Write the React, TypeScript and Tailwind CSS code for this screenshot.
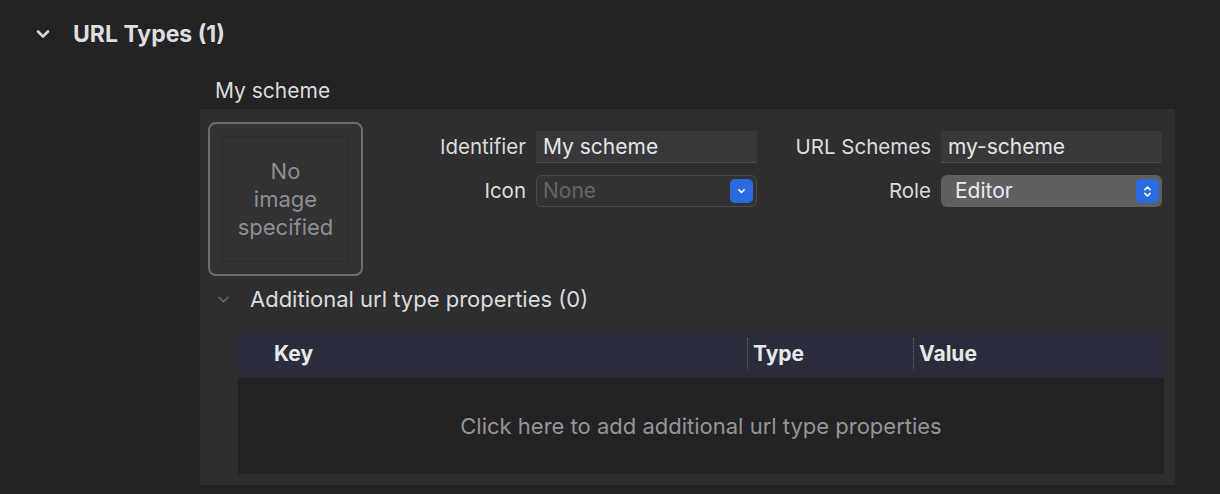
import React from 'react';

// Xcode-style "URL Types" editor panel

const Chevron = ({ className }: { className?: string }) => (
  <svg viewBox="0 0 14 10" className={className} fill="none" stroke="currentColor" strokeLinecap="round" strokeLinejoin="round">
    <path d="M2 2.5 L7 7.5 L12 2.5" />
  </svg>
);

const PopupButton = ({ double }: { double?: boolean }) => (
  <div className="w-[23px] h-[24px] rounded-[5px] bg-[#2b6be0] flex items-center justify-center">
    {double ? (
      <svg viewBox="0 0 10 16" className="w-[9px] h-[15px]" fill="none" stroke="white" strokeWidth="1.8" strokeLinecap="round" strokeLinejoin="round">
        <path d="M2 6 L5 3 L8 6" />
        <path d="M2 10 L5 13 L8 10" />
      </svg>
    ) : (
      <svg viewBox="0 0 10 8" className="w-[9px] h-[7px]" fill="none" stroke="white" strokeWidth="1.8" strokeLinecap="round" strokeLinejoin="round">
        <path d="M2 2 L5 5 L8 2" />
      </svg>
    )}
  </div>
);

export default function App() {
  return (
    <div className="w-[1220px] h-[494px] bg-[#232326] text-[21px] text-[#e4e4e4] overflow-hidden" style={{ fontFamily: 'Inter, "Noto Sans", sans-serif' }}>
      {/* Section header */}
      <div className="flex items-center h-[34px] mt-[17px] pl-[36px]">
        <Chevron className="w-[14px] h-[10px] text-[#d6d6d6] [stroke-width:2.6]" />
        <span className="ml-[23px] font-bold text-[23px] text-[#dedede]">URL Types (1)</span>
      </div>

      {/* Item title */}
      <div className="ml-[215px] mt-[22px] h-[36px] leading-[36px] text-[#dcdcdc]">My scheme</div>

      {/* Item panel */}
      <div className="ml-[200px] w-[975px] h-[376px] bg-[#2e2e30] flex flex-col">
        <div className="flex items-start pt-[13px] pl-[8px]">
          {/* Image well */}
          <div className="w-[155px] h-[154px] rounded-[8px] border-2 border-[#6c6c6e] bg-[#323234] p-[12px]">
            <div className="w-full h-full border border-[#2c2c2e] flex items-center justify-center text-center text-[22px] text-[#8f8f91] leading-[28px]">
              No<br />image<br />specified
            </div>
          </div>

          {/* Form */}
          <div className="grid grid-cols-[163px_221px_164px_221px] gap-x-[10px] gap-y-[12px] mt-[9px] items-center">
            <div className="text-right text-[20.5px] text-[#dcdcdc]">Identifier</div>
            <div className="h-[32px] bg-[#38383a] border-b border-dotted border-[#5a5a5c] pl-[7px] leading-[32px] text-[#e6e6e6]">My scheme</div>
            <div className="text-right text-[20.5px] text-[#dcdcdc]">URL Schemes</div>
            <div className="h-[32px] bg-[#38383a] border-b border-dotted border-[#5a5a5c] pl-[7px] leading-[32px] text-[#e6e6e6]">my-scheme</div>

            <div className="text-right text-[20.5px] text-[#dcdcdc]">Icon</div>
            <div className="h-[32px] rounded-[6px] border border-[#4a4a4c] bg-[#323234] flex items-center justify-between pl-[6px] pr-[3px]">
              <span className="text-[#666668]">None</span>
              <PopupButton />
            </div>
            <div className="text-right text-[20.5px] text-[#dcdcdc]">Role</div>
            <div className="h-[32px] rounded-[6px] bg-[#5f5f61] flex items-center justify-between pl-[14px] pr-[3px]">
              <span className="text-[#ececec]">Editor</span>
              <PopupButton double />
            </div>
          </div>
        </div>

        {/* Additional properties */}
        <div className="flex items-center mt-[11px] h-[24px] pl-[17px]">
          <Chevron className="w-[13px] h-[9px] text-[#6e6e70] [stroke-width:1.4]" />
          <span className="ml-[20px] text-[22px] text-[#dcdcdc]">Additional url type properties (0)</span>
        </div>

        <div className="ml-[38px] mt-[19px] w-[926px] flex flex-col">
          <div className="h-[48px] bg-[#2b2c3b] flex items-center font-bold text-[#e8e8e8]">
            <div className="w-[509px] pl-[36px]">Key</div>
            <div className="w-[166px] h-[32px] flex items-center border-l border-dotted border-[#6a6a72] pl-[5px]">Type</div>
            <div className="flex-1 h-[32px] flex items-center border-l border-dotted border-[#6a6a72] pl-[5px]">Value</div>
          </div>
          <div className="h-[96px] bg-[#232326] flex items-center justify-center text-[22px] text-[#959597]">
            Click here to add additional url type properties
          </div>
        </div>
      </div>
    </div>
  );
}
